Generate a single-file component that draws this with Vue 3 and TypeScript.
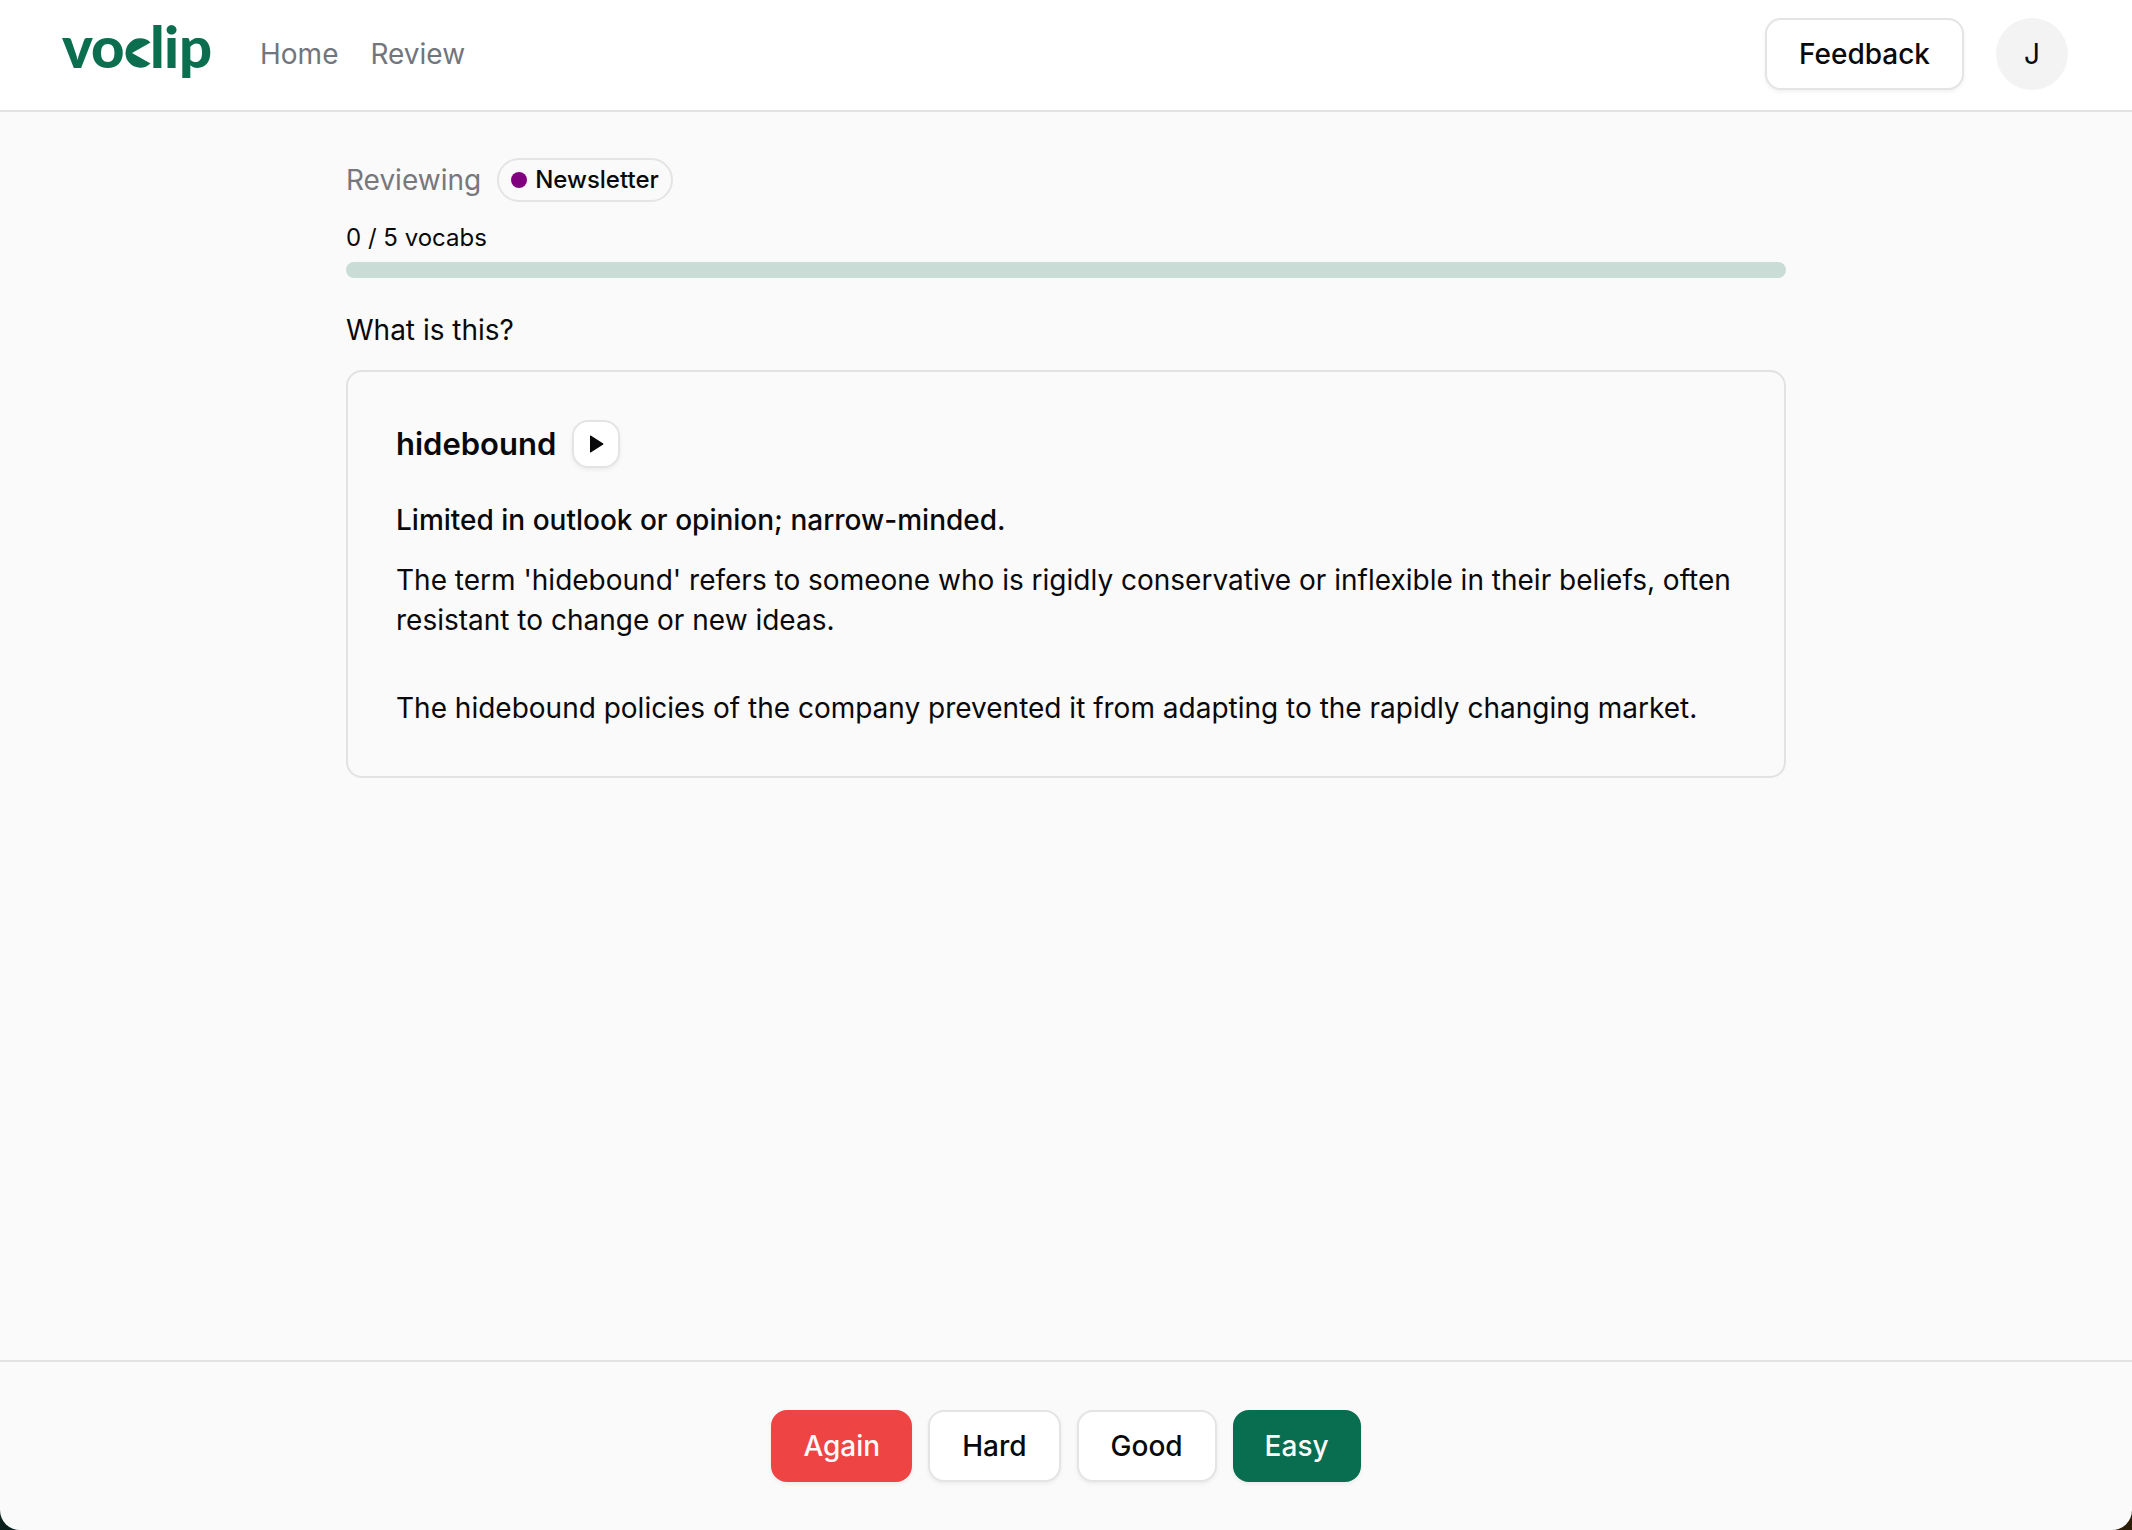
<script setup lang="ts">
import { computed, ref } from 'vue'

type Grade = { label: string; tone: 'danger' | 'outline' | 'primary' }

const links = ['Home', 'Review']
const grades: Grade[] = [
  { label: 'Again', tone: 'danger' },
  { label: 'Hard', tone: 'outline' },
  { label: 'Good', tone: 'outline' },
  { label: 'Easy', tone: 'primary' },
]
const reviewed = ref(0)
const total = 5
const percent = computed(() => (reviewed.value / total) * 100)
</script>

<template>
  <div class="page">
    <header class="topbar">
      <a class="logo" href="#" aria-label="voclip">
        <svg width="160" height="88" viewBox="0 0 160 88" fill="currentColor" aria-hidden="true">
          <text class="wordmark" y="58" x="4 33">vo</text>
          <path d="M92.500 32.500A14.700 14.700 0 1 0 92.500 53.500L74 43Z" />
          <text class="wordmark" y="58" x="92 106 121">lip</text>
        </svg>
      </a>
      <nav class="nav">
        <a v-for="link in links" :key="link" href="#">{{ link }}</a>
      </nav>
      <div class="account">
        <button type="button" class="btn outline">Feedback</button>
        <button type="button" class="avatar">J</button>
      </div>
    </header>

    <main class="content">
      <div class="deck">
        <span class="muted">Reviewing</span>
        <span class="badge"><i class="dot"></i>Newsletter</span>
      </div>
      <p class="count">{{ reviewed }} / {{ total }} vocabs</p>
      <div
        class="progress"
        role="progressbar"
        aria-label="Review progress"
        :aria-valuenow="reviewed"
        :aria-valuemax="total"
      >
        <div class="fill" :style="{ width: percent + '%' }"></div>
      </div>
      <p class="question">What is this?</p>
      <article class="card">
        <div class="term">
          <h1>hidebound</h1>
          <button type="button" class="play" aria-label="Play pronunciation">
            <svg width="24" height="24" viewBox="0 0 24 24" fill="currentColor" aria-hidden="true">
              <path d="M6 4Q6 3.200 6.700 3.600L19.200 11.600Q19.800 12 19.200 12.400L6.700 20.400Q6 20.800 6 20Z" />
            </svg>
          </button>
        </div>
        <p class="definition">Limited in outlook or opinion; narrow-minded.</p>
        <p class="detail">
          The term 'hidebound' refers to someone who is rigidly conservative or inflexible in their
          beliefs, often resistant to change or new ideas.
        </p>
        <p class="example">
          The hidebound policies of the company prevented it from adapting to the rapidly changing
          market.
        </p>
      </article>
    </main>

    <footer class="grades">
      <button v-for="g in grades" :key="g.label" type="button" class="btn" :class="g.tone">
        {{ g.label }}
      </button>
    </footer>
  </div>
</template>

<style>
html {
  background: linear-gradient(90deg, #0b1f1c, #2c1e08);
}
body {
  margin: 0;
}
</style>

<style scoped>
.page {
  display: flex;
  flex-direction: column;
  min-height: 100vh;
  box-sizing: border-box;
  overflow: hidden;
  border-radius: 0 0 20px 20px;
  background: #fafafa;
  color: #09090b;
  font-family: Inter, 'Liberation Sans', sans-serif;
  font-size: 28px;
  line-height: 40px;
}
p,
h1 {
  margin: 0;
}
button {
  font: inherit;
  color: inherit;
  box-sizing: border-box;
  cursor: pointer;
}
.topbar {
  display: flex;
  align-items: center;
  padding: 10px 64px 12px 58px;
  border-bottom: 2px solid #e2e2e4;
  background: #fff;
}
.logo {
  display: flex;
  color: #0a6e4f;
}
.wordmark {
  font-family: Lato, sans-serif;
  font-size: 58px;
  font-weight: 900;
}
.nav {
  display: flex;
  gap: 32px;
  margin-left: 42px;
}
.nav a {
  color: #71757c;
  text-decoration: none;
}
.account {
  display: flex;
  align-items: center;
  gap: 32px;
  margin-left: auto;
}
.btn {
  height: 72px;
  padding: 0 32px;
  border: 2px solid transparent;
  border-radius: 16px;
  font-weight: 500;
  box-shadow: 0 2px 4px rgba(0, 0, 0, 0.06);
}
.outline {
  border-color: #e4e4e7;
  background: #fff;
}
.danger,
.primary {
  padding: 0 30px;
  color: #fafafa;
}
.danger {
  border-color: #ef4444;
  background: #ef4444;
}
.primary {
  border-color: #086e4f;
  background: #086e4f;
}
.avatar {
  width: 72px;
  height: 72px;
  padding: 0;
  border: 0;
  border-radius: 50%;
  background: #f3f3f4;
}
.content {
  flex: 1;
  box-sizing: border-box;
  width: 100%;
  max-width: 1440px;
  margin: 0 auto;
  padding: 46px 0 48px;
}
.deck {
  display: flex;
  align-items: center;
  gap: 16px;
}
.muted {
  color: #77777c;
}
.badge {
  display: flex;
  align-items: center;
  gap: 8px;
  box-sizing: border-box;
  height: 44px;
  padding: 0 12px;
  border: 2px solid #e4e4e7;
  border-radius: 22px;
  font-size: 24px;
  font-weight: 500;
}
.dot {
  width: 16px;
  height: 16px;
  border-radius: 50%;
  background: #800080;
}
.count {
  margin: 20px 0 8px;
  font-size: 24px;
  line-height: 32px;
}
.progress {
  height: 16px;
  overflow: hidden;
  border-radius: 8px;
  background: #c9ddd6;
}
.fill {
  height: 100%;
  background: #086e4f;
}
.question {
  margin: 32px 0 20px;
}
.card {
  padding: 48px;
  border: 2px solid #e2e2e4;
  border-radius: 16px;
}
.term {
  display: flex;
  align-items: center;
  gap: 16px;
}
.term h1 {
  font-size: 31px;
  font-weight: 600;
}
.play {
  display: flex;
  align-items: center;
  justify-content: center;
  width: 48px;
  height: 48px;
  padding: 0;
  border: 2px solid #e4e4e7;
  border-radius: 16px;
  background: #fff;
  box-shadow: 0 2px 4px rgba(0, 0, 0, 0.06);
}
.definition {
  margin: 32px 0 20px;
  font-weight: 500;
}
.example {
  margin-top: 48px;
}
.grades {
  display: flex;
  justify-content: center;
  gap: 16px;
  padding: 48px;
  border-top: 2px solid #e2e2e4;
}
</style>
